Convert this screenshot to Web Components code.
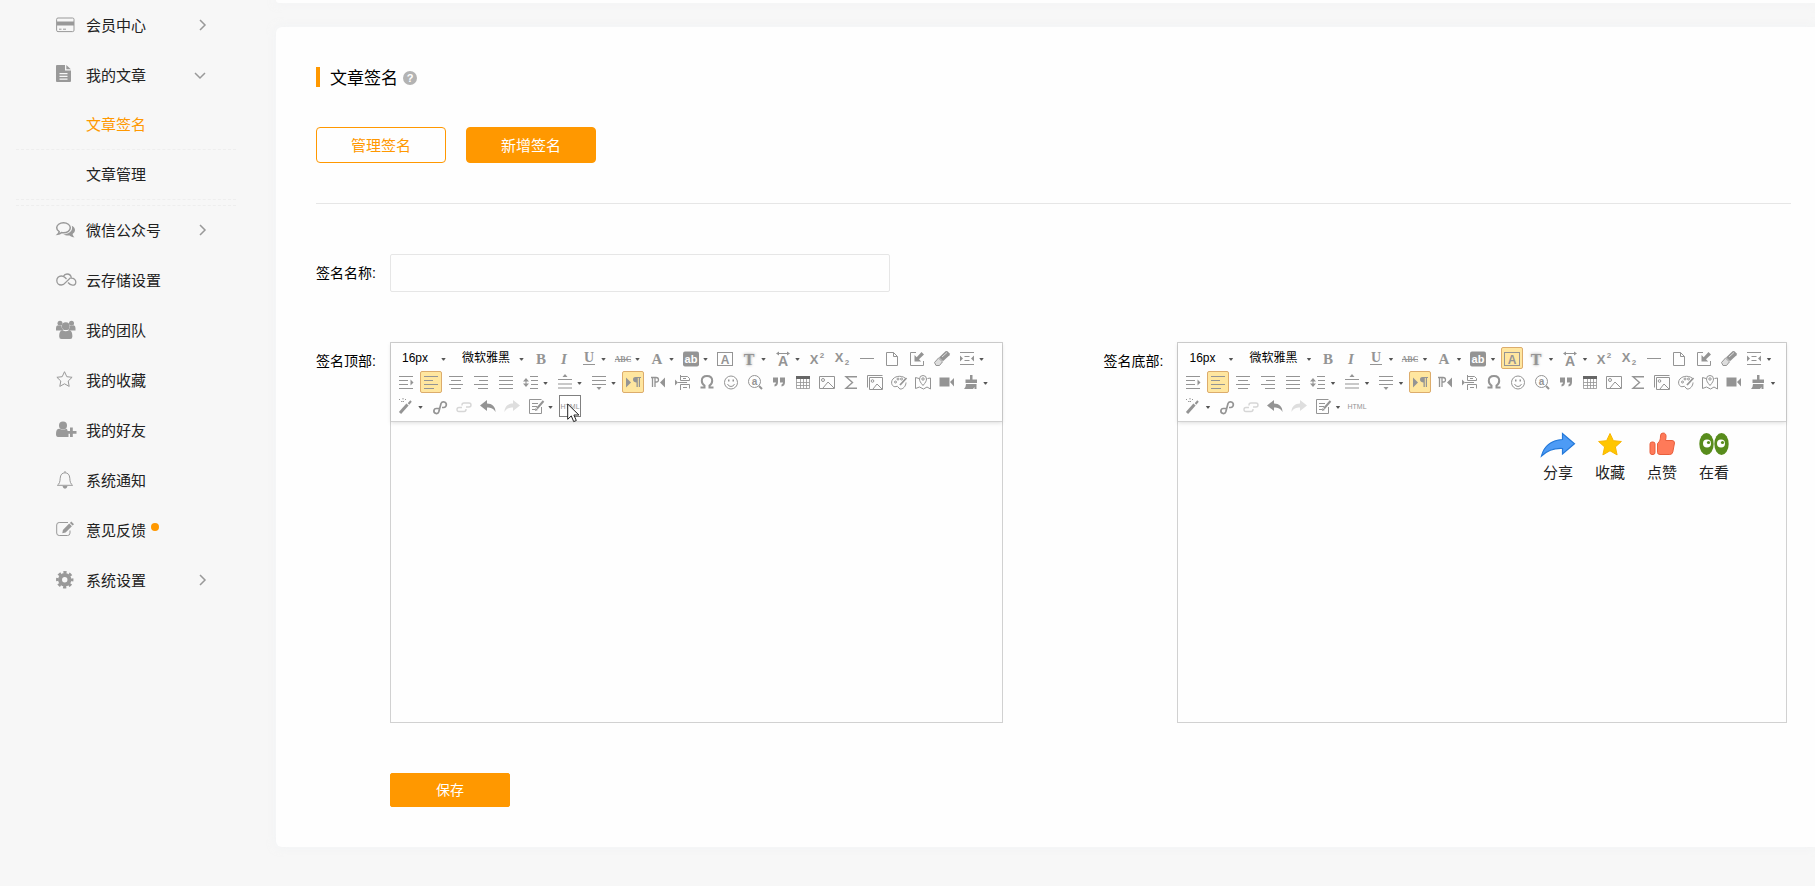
<!DOCTYPE html>
<html lang="zh-CN">
<head>
<meta charset="utf-8">
<title>文章签名</title>
<style>
body {
    margin: 0;
    min-height: 100vh;
    background: #f7f7f7;
    color: #000;
    font-family: "Liberation Sans", "Noto Sans CJK SC", sans-serif;
    font-size: 14px;
    --accent: #ff9800;
    --icon: #949494;
}
</style>
</head>
<body>
<page-layout>
    <side-nav slot="nav">
        <nav-item icon="card" arrow="right">会员中心</nav-item>
        <nav-item icon="doc" arrow="down">我的文章</nav-item>
        <nav-group>
            <nav-item sub active>文章签名</nav-item>
            <nav-item sub>文章管理</nav-item>
        </nav-group>
        <nav-item icon="comments" arrow="right">微信公众号</nav-item>
        <nav-item icon="cloud">云存储设置</nav-item>
        <nav-item icon="team">我的团队</nav-item>
        <nav-item icon="star">我的收藏</nav-item>
        <nav-item icon="friend">我的好友</nav-item>
        <nav-item icon="bell">系统通知</nav-item>
        <nav-item icon="feedback" dot>意见反馈</nav-item>
        <nav-item icon="gear" arrow="right">系统设置</nav-item>
    </side-nav>
    <content-card>
        <card-title>文章签名</card-title>
        <ui-button variant="outline" slot="tabs">管理签名</ui-button>
        <ui-button slot="tabs">新增签名</ui-button>
        <text-field slot="form" label="签名名称:"></text-field>
        <editor-row slot="form">
            <sign-editor label="签名顶部:" hover="html"></sign-editor>
            <sign-editor label="签名底部:" active="fontborder">
                <share-item icon="share">分享</share-item>
                <share-item icon="fav">收藏</share-item>
                <share-item icon="like">点赞</share-item>
                <share-item icon="look">在看</share-item>
            </sign-editor>
        </editor-row>
        <ui-button slot="form" variant="save">保存</ui-button>
    </content-card>
</page-layout>

<script>
const serif = 'font-family="Liberation Serif" font-weight="bold" stroke="none" fill="currentColor" text-anchor="middle"';
const sans = 'font-family="Liberation Sans" font-weight="bold" stroke="none" fill="currentColor" text-anchor="middle"';
const solid = 'fill="currentColor" stroke="none"';

// every icon is drawn on a 20x20 grid
const icons = {
    // side nav
    card: `<rect x=".6" y="3" width="17.4" height="13.6" rx="1.4"/><path ${solid} d="M1 6.5h17v4H1z"/><path d="M3 14.2h2.5M7 14.2h3"/>`,
    doc: `<path ${solid} fill-rule="evenodd" d="M1 0h8v5.5h6V16a1 1 0 0 1-1 1H1a1 1 0 0 1-1-1V1a1 1 0 0 1 1-1zM3.5 8v1.3h8V8zm0 2.7V12h8v-1.3zm0 2.7v1.3h8v-1.3z"/><path ${solid} d="M10.3 0v4.3h4.5z"/>`,
    comments: `<path stroke-width="1.5" d="M7.5 2.8c3.8 0 6.8 2.2 6.8 5s-3 5-6.8 5q-1 0-2-.2Q3.7 14 1.8 14.2q1.3-1.2 1.4-2.6C1.6 10.7.7 9.3.7 7.8c0-2.8 3-5 6.800-5z"/><path ${solid} d="M15.7 5.8c2 .9 3.3 2.5 3.3 4.3 0 1.5-.9 2.9-2.4 3.800.2 1.400.8 2.400 2 3.400-2.200 0-3.800-.7-5-1.800-2.300.3-4.600-.1-6.300-1.200 4.600.1 8.800-2.300 8.800-6.500q0-1-.4-2z"/>`,
    cloud: `<path stroke-width="1.3" d="M10.500 9L9 7.500C8 6.500 7 6 5.300 6 2.700 6 .8 8 .8 10.500S2.700 15 5.300 15c2.200 0 3.500-1.400 4.700-2.900l4.500-4.300"/><path stroke-width="1.3" d="M7.500 6.200C8.200 4.800 9.500 4 11 4c2.300 0 4.200 1.500 4.300 4.200 2.500-.1 4.500 1.400 4.500 3.700 0 2-1.500 3.300-3.400 3.300-2 0-3.200-1.300-4.400-2.700"/>`,
    team: `<g ${solid}><circle cx="4" cy="3.200" r="2.500"/><circle cx="15.500" cy="3.200" r="2.500"/><path d="M0 10.500V8q0-2.700 2-2.700 2 1 3.300.2.200 3 2 4.500l-1 .5zM19.500 10.500V8q0-2.700-2-2.700-2 1-3.300.2-.2 3-2 4.500l1 .5z"/><circle cx="9.750" cy="6.200" r="3.900"/><path d="M3.200 16.500c0-4 1-6.300 3.500-6.300q3 2 6.200 0c2.500 0 3.500 2.300 3.500 6.300q0 2.500-2.300 2.500H5.500q-2.300 0-2.300-2.500z"/></g>`,
    star: `<path d="M8.500 1.700l2.300 5 5.300.6-3.900 3.700 1 5.400-4.700-2.600-4.700 2.600 1-5.400L.9 7.300l5.300-.6z"/>`,
    friend: `<g ${solid}><circle cx="7" cy="5.500" r="4"/><path d="M0 14c0-3.500 1-5.300 3.500-5.300q3.500 2.300 7 0l1 1.300v2.800h1V17H2q-2 0-2-3z"/><path d="M10 11h4V7.500h2.800V11h3.700v2.800h-3.700V17H14v-3.200h-4z"/></g>`,
    bell: `<path d="M9 1v1.700M1.400 15.300c2-1.500 2.600-3.300 2.800-7C4.400 4.600 6.200 2.800 9 2.800s4.600 1.800 4.800 5.500c.2 3.700.8 5.500 2.800 7z"/><path ${solid} d="M6.500 16h5q-.5 2.700-2.500 2.700T6.500 16z"/>`,
    feedback: `<path d="M12 2.500H3.200Q.7 2.500.7 5v8q0 2.500 2.500 2.500h8.300q2.500 0 2.500-2.500v-2.500"/><path ${solid} d="M15.300 1.500l2.700 2.700-1.400 1.400-2.700-2.700zM13.200 3.600l2.700 2.700-6.300 6.300-3.300.7.600-3.400z"/>`,
    gear: `<circle cx="8.750" cy="9.700" r="4.700" stroke-width="4"/><circle cx="8.750" cy="9.700" r="7.400" stroke-width="2.600" stroke-dasharray="3.200 2.612" stroke-dashoffset="1.600"/>`,
    help: `<circle ${solid} cx="10" cy="11" r="7"/><text ${sans} style="fill:#fefefe" x="10" y="15" font-size="11">?</text>`,

    // toolbar, first row
    bold: `<text ${serif} x="10" y="16" font-size="15">B</text>`,
    italic: `<text ${serif} font-style="italic" x="9" y="16" font-size="15">I</text>`,
    underline: `<text ${serif} x="10" y="14" font-size="14">U</text><path d="M4 16.500h12"/>`,
    strike: `<text ${serif} x="10" y="14" font-size="8">ABC</text><path d="M2 11.500h16"/>`,
    forecolor: `<text ${serif} x="10" y="16" font-size="15">A</text>`,
    backcolor: `<rect ${solid} x="2" y="3.500" width="16" height="15" rx="2"/><text ${sans} style="fill:#fefefe" x="10" y="15" font-size="11">ab</text>`,
    fontborder: `<rect x="2.500" y="4.500" width="15" height="13"/><text ${sans} x="10" y="15.500" font-size="12">A</text>`,
    shadow: `<text ${serif} style="text-shadow:0 0 3px #999" x="10" y="16.500" font-size="16">T</text>`,
    spacing: `<path d="M4 5.500h12"/><path ${solid} d="M3 5.500l3-2v4zM17 5.500l-3-2v4z"/><text ${sans} x="10" y="18" font-size="14">A</text>`,
    sup: `<text ${sans} x="7" y="16" font-size="13">X</text><text ${sans} x="15" y="10" font-size="8">2</text>`,
    sub: `<text ${sans} x="7" y="14" font-size="13">X</text><text ${sans} x="15" y="17" font-size="8">2</text>`,
    rule: `<path d="M3 10.500h14"/>`,
    page: `<path d="M4.500 4.500h7l4 4v9h-11zM11.500 4.500v4h4"/>`,
    insert: `<path d="M9 4.500H3.500v13h13V13"/><path ${solid} d="M7.500 13.500V7l2.200 2.200L14.500 4 17 6.500l-5 4.800 2.200 2.200z"/>`,
    eraser: `<path fill="#ddd" d="M2.500 14.500l4-4.500 4 3.800-3 3.700H4z"/><path ${solid} d="M7 9.500l6.500-6.200q1-.8 2 0l2 2q.8 1 0 2l-6.500 6z"/><path stroke="#ddd" d="M10 9l5-4.500"/>`,
    block: `<path d="M3 4.500h14M3 16.500h14M7.500 8.500h5M7.500 12.500h5"/><path ${solid} d="M3 7.500l3 3-3 3zM17 7.500l-3 3 3 3z"/>`,

    // second row
    indent: `<path d="M3 4.500h14M3 8.500h9M3 12.500h9M3 16.500h14"/><path ${solid} d="M14.500 7.500l3 3-3 3z"/>`,
    left: `<path d="M3 4.500h14M3 8.500h9M3 12.500h14M3 16.500h10"/>`,
    center: `<path d="M3 4.500h14M5 8.500h10M3 12.500h14M5 16.500h10"/>`,
    right: `<path d="M3 4.500h14M8 8.500h9M3 12.500h14M7 16.500h10"/>`,
    justify: `<path d="M3 4.500h14M3 8.500h14M3 12.500h14M3 16.500h14"/>`,
    lineheight: `<path d="M9 4.500h8M10 8.500h7M10 12.500h7M9 16.500h8"/><path ${solid} d="M5 6l3 3.500H2zM5 15l3-3.500H2z"/><path d="M5 8v5"/>`,
    spacetop: `<path ${solid} d="M10 2l2.500 3h-5z"/><path d="M3 7.500h14"/><path stroke="#c8c8c8" stroke-width="2" d="M3 12h14M3 16h14"/>`,
    spacebottom: `<path d="M3 4.500h14M3 8.500h14M3 12.500h14"/><path ${solid} d="M10 18l2.500-3h-5z"/>`,
    ltr: `<path ${solid} d="M3 5.500l5 5-5 5z"/><path ${solid} d="M12.500 5H18v1h-1v9h-1.200V6h-1v9h-1.300v-4.500c-1.600 0-3.500-.7-3.500-2.700S10.500 5 12.500 5z"/>`,
    rtl: `<path ${solid} d="M17 5.500l-5 5 5 5z"/><path stroke-width="1.300" d="M3 5.500h5q2.500 0 2.500 2.300T8 10H7M4.500 5.500V15M7 5.500V15"/>`,
    pagebreak: `<path d="M7.500 3v5.500h9V6.500l-2-2h-7M10 6.500h3M7.500 18v-5.500h9V16.500M10 15.500h4M5 10.500h9"/><path ${solid} d="M2 7.500l3 3-3 3z"/>`,
    omega: `<path stroke-width="2" d="M3.500 15.500h4v-2C6 12.500 4.800 10.800 4.800 8.700 4.800 5.800 7 4 10 4s5.200 1.800 5.200 4.700c0 2.100-1.200 3.800-2.700 4.800v2h4"/>`,
    smile: `<circle cx="10" cy="10.500" r="6.500"/><path d="M6.500 12q1 2.500 3.500 2.500t3.500-2.500"/><path ${solid} d="M7 7.500h1.500v2H7zM11.500 7.500H13v2h-1.500z"/>`,
    search: `<circle cx="9.500" cy="9.500" r="6"/><path stroke-width="2" d="M14 14l3 3"/><text ${sans} x="9.500" y="13" font-size="10">a</text>`,
    quote: `<path ${solid} d="M4 5.500h5V10q0 4-3.500 4.500v-2q1.500-.5 1.500-2H4zM11 5.500h5V10q0 4-3.500 4.500v-2q1.500-.5 1.500-2h-3z"/>`,
    table: `<path stroke="none" fill="#666" d="M3 4h14v3H3z"/><path d="M3.500 7v9.500h13V7M3.500 10.500h13M3.500 13.500h13M7.500 7v9.500M10.500 7v9.500M13.500 7v9.500" stroke-opacity=".8"/>`,
    image: `<path d="M2.500 4.500h15v12h-15zM6 16l5-6 6 6"/><circle cx="6" cy="8" r="1.500"/>`,
    sigma: `<path stroke-width="1.400" d="M16 4.700H5l6.500 5.800L5 16.300h11"/>`,
    gallery: `<path d="M2.500 15.500v-12h15M4.500 5.500h13v12h-13zM8 17l4-5 5 5"/><circle cx="7.500" cy="9" r="1.300"/>`,
    palette: `<path d="M16 6C12 3 5 4 3 8.500c-1.500 4 1.500 7 4 6s2 1.500 4 2.500c3 .5 6-3 6-6.500"/><circle cx="6.500" cy="10" r="1"/><circle cx="9" cy="7" r="1"/><circle cx="12.500" cy="7" r="1"/><path stroke-width="1.800" d="M17.500 6L11 13"/>`,
    map: `<path d="M6 6.500l-3.500-1v11l4-1.500 4 2 3.500-2 3.500 2v-11L14.500 6.500"/><path d="M10 13.500C7.500 10.500 6.500 9 6.500 7a3.500 3.500 0 0 1 7 0c0 2-1 3.500-3.500 6.500z"/><circle cx="10" cy="7" r="1.200"/>`,
    video: `<path ${solid} d="M2.500 5.500h10v9h-10zM13 10l4-4v8.500z"/>`,
    clean: `<path ${solid} d="M9 3h2.500v4.500H16V11H4.500V7.500H9zM5 12h10.500v5h-2v-2l-1.500 2H3q2-2 2-5z"/>`,

    // third row
    wand: `<path stroke-width="3" d="M4 17l7.500-8.500"/><path stroke-width="2" d="M12.500 8L15 5"/><path stroke-dasharray="1.500 1.500" d="M3 3l3 3M10 3L7 6M7 2v4"/>`,
    link: `<path stroke-width="1.700" d="M9 12.500H6.500a2.500 2.500 0 1 0 2.300 3.200L11 7.500a2.800 2.800 0 1 1 2.700 4H12"/>`,
    unlink: `<path stroke-width="1.400" stroke="#d6d6d6" d="M8 9.500V9q0-2 2-2h5q2 0 2 2t-2 2h-3M12 13v.5q0 2-2 2H5q-2 0-2-2t2-2h3"/>`,
    undo: `<path ${solid} d="M2 9.500L9 4v3.500c5 0 8.500 3 8.500 8.500-2-3.500-4.500-4.500-8.500-4.500V15z"/>`,
    redo: `<path stroke="none" fill="#dedede" d="M18 9.500L11 4v3.500c-5 0-8.500 3-8.500 8.500 2-3.500 4.500-4.500 8.500-4.500V15z"/>`,
    template: `<path d="M15.500 11v6.500h-12v-14h12M6 7.500h6M6 10.500h5M6 13.500h3"/><path stroke-width="2" d="M17.500 5L11 12.500"/><path ${solid} d="M9 15l.5-3 2.500 2z"/>`,
    html: `<text font-family="Liberation Sans" stroke="none" fill="currentColor" text-anchor="middle" x="10" y="13" font-size="7">HTML</text>`,

    // shown inside the editor
    share: `<path fill="#4d9bf5" stroke="#2479d9" stroke-width="1.200" d="M-6.500 22C-4 12 2 6.500 14.500 5.500V-.5L26.500 9.700 14.500 20v-5.500C6 14 0 16-6.500 22z"/>`,
    fav: `<path fill="#ffc600" stroke="#f8b500" d="M10-.5l3.400 7.200 8 .8-6 5.400 1.700 8L10 16.800 2.900 20.900l1.700-8-6-5.400 8-.8z"/>`,
    like: `<rect x="-2" y="8" width="5" height="12.500" rx="2" fill="#ff7a59" stroke="#e85f3d"/><path fill="#ff7a59" stroke="#e85f3d" d="M5.500 9.500C8 7.500 8.500 5 8.500 2q0-3 2.500-3 3.500 0 3 4.500l-.5 3H20q2.500 0 2.500 2.500L20.800 18q-.6 2.500-3 2.500H8q-2.500 0-2.500-2z"/>`,
    look: `<g stroke="none"><ellipse cx="2.500" cy="10" rx="7.200" ry="11" fill="#588c1c"/><ellipse cx="17.500" cy="10" rx="7.200" ry="11" fill="#588c1c"/><circle cx="3" cy="9.500" r="4" fill="#fff"/><circle cx="17" cy="9.500" r="4" fill="#fff"/><circle cx="4.500" cy="8.500" r="1.600" fill="#588c1c"/><circle cx="18.500" cy="8.500" r="1.600" fill="#588c1c"/></g>`
};

function svg(name) {
    return `<svg viewBox="0 0 20 20" width="20" height="20" fill="none" stroke="currentColor" aria-hidden="true">${icons[name]}</svg>`;
}

const svgCss = /*css*/`svg { display: block; flex: none; overflow: visible; }`;

class BaseElement extends HTMLElement {
    constructor() {
        super();
        this.attachShadow({mode: "open"});
    }

    connectedCallback() {
        this.shadowRoot.innerHTML = this.render();
    }
}

class PageLayout extends BaseElement {
    render() {
        return `
            <style>
                :host { display: flex; align-items: flex-start; }
                main { flex: 1; min-width: 0; }
                .strip {
                    height: 3px;
                    margin-bottom: 24px;
                    border-radius: 0 0 0 6px;
                    background: #fefefe;
                    box-shadow: 0 0 8px #edf2f680;
                }
            </style>
            <slot name="nav"></slot>
            <main>
                <div class="strip"></div>
                <slot></slot>
            </main>
        `;
    }
}

class SideNav extends BaseElement {
    render() {
        return `
            <style>
                :host { display: block; flex: none; width: 220px; padding: 0 40px 0 16px; }
            </style>
            <nav><slot></slot></nav>
        `;
    }
}

class NavGroup extends BaseElement {
    render() {
        return `
            <style>
                :host {
                    display: block;
                    padding-bottom: 5px;
                    border-bottom: 1px dashed #eee;
                    margin-bottom: -1px;
                }
            </style>
            <slot></slot>
        `;
    }
}

class NavItem extends BaseElement {
    render() {
        const icon = this.getAttribute("icon");
        const arrow = this.getAttribute("arrow");
        return `
            <style>
                :host { display: block; color: #222; font-size: 15px; }
                :host([active]) { color: var(--accent); }
                a {
                    box-sizing: border-box;
                    height: 50px;
                    padding: 0 30px 0 40px;
                    display: flex;
                    align-items: center;
                    color: inherit;
                    text-decoration: none;
                }
                :host([sub]) a { border-bottom: 1px dashed #eee; }
                .icon { width: 30px; color: #999; }
                .text { padding-bottom: 2px; }
                .dot {
                    width: 8px;
                    height: 8px;
                    margin: 0 0 6px 5px;
                    border-radius: 50%;
                    background: var(--accent);
                }
                .arrow { margin-left: auto; color: #999; }
                ${svgCss}
            </style>
            <a href="#">
                <span class="icon">${icon ? svg(icon) : ""}</span>
                <span class="text"><slot></slot></span>
                ${this.hasAttribute("dot") ? `<span class="dot"></span>` : ""}
                ${arrow == "right" ? `<svg class="arrow" width="7" height="12" fill="none" stroke="currentColor" stroke-width="1.5"><path d="M1 1l5 5-5 5"/></svg>` : ""}
                ${arrow == "down" ? `<svg class="arrow" width="12" height="7" fill="none" stroke="currentColor" stroke-width="1.5"><path d="M1 1l5 5 5-5"/></svg>` : ""}
            </a>
        `;
    }
}

class ContentCard extends BaseElement {
    render() {
        return `
            <style>
                :host {
                    display: block;
                    padding: 40px 24px 40px 40px;
                    border-radius: 6px 0 0 6px;
                    background: #fefefe;
                    box-shadow: 0 0 8px #edf2f680;
                }
                .tabs {
                    display: flex;
                    gap: 20px;
                    padding: 40px 0;
                    border-bottom: 1px solid #e6e6e6;
                }
                .form {
                    display: flex;
                    flex-direction: column;
                    gap: 50px;
                    padding-top: 50px;
                }
            </style>
            <slot></slot>
            <div class="tabs"><slot name="tabs"></slot></div>
            <div class="form"><slot name="form"></slot></div>
        `;
    }
}

class CardTitle extends BaseElement {
    render() {
        return `
            <style>
                :host { display: block; }
                h1 {
                    display: flex;
                    align-items: center;
                    height: 20px;
                    margin: 0;
                    padding-left: 10px;
                    border-left: 4px solid var(--accent);
                    font-size: 17px;
                    font-weight: normal;
                }
                .text { padding-bottom: 2px; }
                svg { margin-left: 2px; color: #b3b3b3; }
                ${svgCss}
            </style>
            <h1><span class="text"><slot></slot></span>${svg("help")}</h1>
        `;
    }
}

class UiButton extends BaseElement {
    render() {
        return `
            <style>
                :host { display: block; }
                :host([variant="save"]) { margin-left: 74px; }
                button {
                    box-sizing: border-box;
                    width: 130px;
                    height: 36px;
                    padding: 0 0 2px;
                    border: 1px solid var(--accent);
                    border-radius: 4px;
                    background: var(--accent);
                    color: #fff;
                    font: inherit;
                    font-size: 15px;
                    cursor: pointer;
                }
                :host([variant="outline"]) button { background: #fefefe; color: var(--accent); }
                :host([variant="save"]) button { width: 120px; height: 34px; border-radius: 2px; font-size: 14px; }
            </style>
            <button type="button"><slot></slot></button>
        `;
    }
}

class TextField extends BaseElement {
    render() {
        return `
            <style>
                :host { display: flex; align-items: center; }
                label { flex: none; width: 74px; padding-bottom: 2px; }
                input {
                    box-sizing: border-box;
                    width: 500px;
                    height: 38px;
                    padding: 0 10px;
                    border: 1px solid #e6e6e6;
                    border-radius: 2px;
                    background: #fefefe;
                    font: inherit;
                }
            </style>
            <label for="field">${this.getAttribute("label")}</label>
            <input id="field" type="text">
        `;
    }
}

class EditorRow extends BaseElement {
    render() {
        return `
            <style>
                :host {
                    display: grid;
                    grid-template-columns: minmax(0, 172fr) minmax(0, 171fr);
                    column-gap: 100px;
                    padding-right: 4px;
                }
            </style>
            <slot></slot>
        `;
    }
}

// rows of button groups, a star marks a button with a menu arrow
const toolbar = [
    [
        {tools: ["bold", "italic", "underline*", "strike*", "forecolor*", "backcolor*", "fontborder", "shadow*", "spacing*"]},
        {loose: true, tools: ["sup", "sub", "rule", "page", "insert", "eraser", "block*"]}
    ],
    [
        {loose: true, tools: ["indent", "left", "center", "right", "justify", "lineheight*"]},
        {tools: ["spacetop*", "spacebottom*"]},
        {loose: true, tools: ["ltr", "rtl", "pagebreak"]},
        {tools: ["omega", "smile", "search", "quote", "table", "image", "sigma", "gallery", "palette", "map", "video", "clean*"]}
    ],
    [
        {tools: ["wand*", "link", "unlink", "undo", "redo", "template*", "html"]}
    ]
];

class SignEditor extends BaseElement {
    tool(item) {
        const name = item.replace("*", "");
        const active = ["left", "ltr", this.getAttribute("active")].includes(name);
        const hover = this.getAttribute("hover") == name;
        const cls = active ? "active" : hover ? "hover" : "";
        return `
            <button type="button" class="${cls}" aria-label="${name}">
                <span class="box">${svg(name)}</span>
                ${item.endsWith("*") ? `<span class="caret"></span>` : ""}
                ${hover ? `<svg class="cursor" width="13" height="20" viewBox="0 0 13 20" fill="#fff" stroke="#222"><path d="M.7 1v15.300l3.600-3.400 2.400 5.700 2.600-1.100-2.400-5.500h5z"/></svg>` : ""}
            </button>
        `;
    }

    group(g) {
        return `<div class="group ${g.loose ? "loose" : ""}">${g.tools.map(t => this.tool(t)).join("")}</div>`;
    }

    combo(cls, label, value) {
        return `<span class="combo ${cls}"><select aria-label="${label}"><option>${value}</option></select><span class="caret"></span></span>`;
    }

    render() {
        const fonts = `
            <div class="group fonts">
                ${this.combo("size", "字号", "16px")}
                ${this.combo("family", "字体", "微软雅黑")}
            </div>
        `;
        const rows = toolbar.map((groups, i) => `
            <div class="row">${i == 0 ? fonts : ""}${groups.map(g => this.group(g)).join("")}</div>
        `).join("");
        return `
            <style>
                :host { display: flex; align-items: flex-start; }
                .label { flex: none; width: 74px; line-height: 38px; }
                .editor { flex: 1; min-width: 0; border: 1px solid #d1d1d1; }
                .toolbar {
                    position: relative;
                    display: flex;
                    flex-direction: column;
                    gap: 2px;
                    padding: 4px;
                    border-bottom: 1px solid #d1d1d1;
                    box-shadow: 0 1px 4px #00000022;
                    color: var(--icon);
                }
                .row, .group { display: flex; gap: 2px; }
                .group.loose { gap: 3px; }
                .group.fonts { gap: 5px; }
                button {
                    position: relative;
                    display: flex;
                    align-items: center;
                    height: 22px;
                    padding: 0;
                    border: 0;
                    background: none;
                    color: inherit;
                }
                .box { box-sizing: border-box; width: 22px; height: 22px; border: 1px solid transparent; border-radius: 2px; }
                .active .box { border-color: #dcac6c; background: #ffe69f; }
                .hover .box { border-color: #808080; border-radius: 0; background: #fff; }
                .caret {
                    width: 10px;
                    height: 3px;
                    margin-top: 2px;
                    background: #555;
                    clip-path: polygon(1px 0, 6px 0, 4px 3px, 3px 3px);
                }
                .combo { display: grid; align-items: center; }
                .combo > * { grid-area: 1 / 1; }
                .combo .caret { justify-self: end; pointer-events: none; }
                .size { width: 55px; }
                .family { width: 73px; }
                select {
                    width: 100%;
                    height: 20px;
                    padding: 0 0 0 7px;
                    border: 0;
                    appearance: none;
                    background: none;
                    color: #000;
                    font: inherit;
                    font-size: 12px;
                }
                .cursor { position: absolute; left: 8px; top: 8px; z-index: 1; }
                .content {
                    box-sizing: border-box;
                    height: 300px;
                    padding: 8px 57px;
                    display: flex;
                    justify-content: flex-end;
                    gap: 22px;
                    outline: none;
                }
                ${svgCss}
            </style>
            <div class="label" id="label">${this.getAttribute("label")}</div>
            <div class="editor">
                <div class="toolbar">${rows}</div>
                <div class="content" role="textbox" contenteditable="true" aria-labelledby="label"><slot></slot></div>
            </div>
        `;
    }
}

class ShareItem extends BaseElement {
    render() {
        return `
            <style>
                :host {
                    display: flex;
                    flex-direction: column;
                    align-items: center;
                    gap: 8px;
                    width: 30px;
                    padding-top: 4px;
                    color: #222;
                    font-size: 15px;
                    line-height: 22px;
                }
                ${svgCss}
            </style>
            ${svg(this.getAttribute("icon"))}
            <slot></slot>
        `;
    }
}

customElements.define("page-layout", PageLayout);
customElements.define("side-nav", SideNav);
customElements.define("nav-group", NavGroup);
customElements.define("nav-item", NavItem);
customElements.define("content-card", ContentCard);
customElements.define("card-title", CardTitle);
customElements.define("ui-button", UiButton);
customElements.define("text-field", TextField);
customElements.define("editor-row", EditorRow);
customElements.define("sign-editor", SignEditor);
customElements.define("share-item", ShareItem);
</script>
</body>
</html>
